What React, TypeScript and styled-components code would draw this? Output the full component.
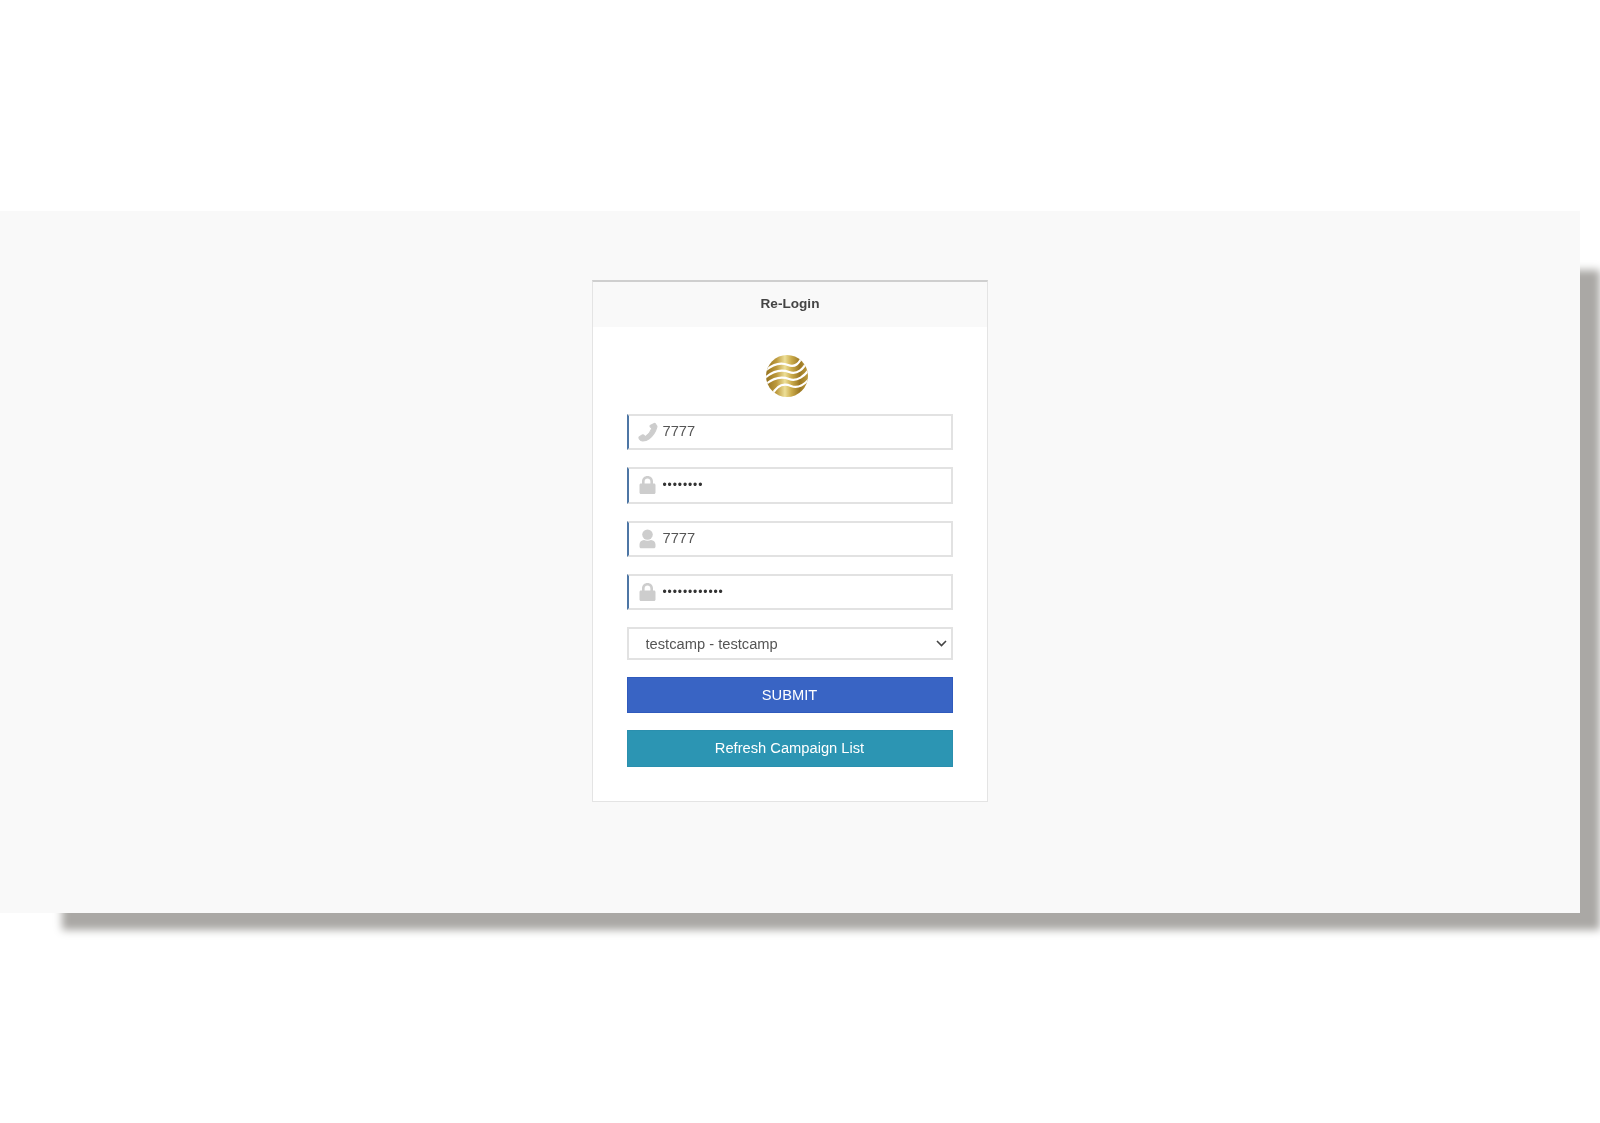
import React from "react";
import styled, { createGlobalStyle } from "styled-components";

const Global = createGlobalStyle`
  html, body { margin: 0; padding: 0; background: #fff; }
  body { font-family: "Liberation Sans", Arial, sans-serif; height: 1123px; overflow: hidden; }
`;

const Backdrop = styled.main`
  margin-top: 211px;
  width: 1580px;
  height: 702px;
  box-sizing: border-box;
  padding: 69px 0 0 592px;
  background: #f9f9f9;
  box-shadow: 41px 38px 8px -21px #aaa8a5;
`;

const Card = styled.section`
  width: 396px;
  box-sizing: border-box;
  background: #fff;
  border: 1px solid #e4e4e4;
  border-top: 2px solid #cfcfcf;
  filter: blur(0.35px);
`;

const CardHeader = styled.header`
  height: 45px;
  box-sizing: border-box;
  padding-bottom: 2px;
  display: flex;
  align-items: center;
  justify-content: center;
  background: #f9f9f9;
  color: #444;
  font-size: 13.6px;
  font-weight: 700;
`;

const CardBody = styled.form`
  display: flex;
  flex-direction: column;
  gap: 17px;
  padding: 28px 34.5px 34px 33.5px;
`;

const Logo = styled.svg`
  display: block;
  width: 42px;
  height: 42px;
  margin-left: 139.5px;
`;

const Field = styled.label`
  display: flex;
  align-items: center;
  height: 36.25px;
  box-sizing: border-box;
  background: #fff;
  border: 2px solid #e2e2e2;
  border-left: 2px solid #4d76a5;
`;

const FieldIcon = styled.svg`
  flex: none;
  width: 20px;
  height: 20px;
  margin-left: 9px;
  fill: #cdcdcd;
`;

const FieldInput = styled.input<{ type: string }>`
  flex: 1;
  min-width: 0;
  border: 0;
  outline: 0;
  padding: 0;
  margin: ${(p) => (p.type === "password" ? "0 0 0 5px" : "0 0 2px 5px")};
  background: transparent;
  color: ${(p) => (p.type === "password" ? "#333" : "#555")};
  font: ${(p) => (p.type === "password" ? "12px" : "14.7px")} "Liberation Sans", Arial, sans-serif;
  letter-spacing: ${(p) => (p.type === "password" ? "0.9px" : "0")};
`;

const SelectWrap = styled.div`
  position: relative;
  display: flex;
  height: 33px;
`;

const CampaignSelect = styled.select`
  flex: 1;
  appearance: none;
  box-sizing: border-box;
  padding: 0 0 0 17px;
  background-color: #fff;
  border: 2px solid #e2e2e2;
  border-radius: 0;
  outline: 0;
  color: #555;
  font: 14.7px "Liberation Sans", Arial, sans-serif;
`;

const SelectChevron = styled.svg`
  position: absolute;
  right: 6px;
  top: 13px;
  width: 11px;
  height: 7px;
  fill: none;
  stroke: #444;
  stroke-width: 1.6;
  pointer-events: none;
`;

const ActionButton = styled.button<{ $bg: string; $edge: string }>`
  height: 36.25px;
  box-sizing: border-box;
  padding: 0;
  border: 1px solid ${(p) => p.$edge};
  border-radius: 0;
  background: ${(p) => p.$bg};
  color: #fff;
  font: 14.7px "Liberation Sans", Arial, sans-serif;
`;

const PhoneIcon = () => (
  <FieldIcon viewBox="0 0 20 20">
    <path
      stroke="#cdcdcd"
      strokeWidth="1.1"
      strokeLinejoin="round"
      d="M15.700 1.700c.5-.5 1.100-.5 1.600 0l1.400 2c.3.5.3 1 .1 1.600C17.600 9.800 14.800 14 10.800 17c-1.800 1.400-4 2.100-6.300 2-1.200 0-2.300-.7-3-1.700l-.4-1c-.3-.6-.1-1.200.4-1.500l2.700-1.900c.6-.3 1.100-.3 1.600.2l1.200 1.200c.3.2.6.2.9 0 2.700-2.100 4.600-4.700 5.800-7.700.1-.3 0-.6-.3-.8l-1-.8c-.4-.4-.5-.9-.2-1.400z"
    />
  </FieldIcon>
);

const LockIcon = () => (
  <FieldIcon viewBox="0 0 20 20">
    <path
      fillRule="evenodd"
      d="M4 8.500V6.500C4 3.200 6.300 1 9.500 1s5.500 2.200 5.500 5.500v2h1c.9 0 1.500.6 1.500 1.500v7.500c0 .9-.6 1.500-1.500 1.500H3c-.9 0-1.500-.6-1.500-1.500V10c0-.9.6-1.500 1.500-1.500zm2.600 0h5.800v-2c0-1.800-1.200-3-2.900-3s-2.900 1.200-2.900 3z"
    />
  </FieldIcon>
);

const UserIcon = () => (
  <FieldIcon viewBox="0 0 20 20">
    <ellipse cx="9.500" cy="5.600" rx="5.300" ry="5.200" />
    <path d="M1.500 15.500c0-2.600 2-4.300 4.500-4.500 2 1 5 1 7 0 2.500.2 4.500 1.900 4.500 4.500v2c0 1-.7 1.800-1.700 1.800H3.200c-1 0-1.700-.8-1.700-1.800z" />
  </FieldIcon>
);

const LogoMark = () => (
  <Logo viewBox="0 0 42 42" role="img" aria-label="Logo">
    <defs>
      <linearGradient id="gold" x1="0" x2="1" y1="0" y2="0">
        <stop offset="0" stopColor="#96731f" />
        <stop offset="0.25" stopColor="#bd9a3e" />
        <stop offset="0.45" stopColor="#eddf97" />
        <stop offset="0.6" stopColor="#cdae4e" />
        <stop offset="0.8" stopColor="#9c7823" />
        <stop offset="1" stopColor="#bd9b3e" />
      </linearGradient>
      <clipPath id="globe">
        <circle cx="21" cy="21" r="21" />
      </clipPath>
    </defs>
    <g clipPath="url(#globe)">
      <rect width="42" height="42" fill="url(#gold)" />
      <g fill="none" stroke="#fff" strokeWidth="2.200">
        <path d="M-1 16C7 9 15 7 22 10 29 13 34 8 36 1" />
        <path d="M-1 23C7 16 15 14 23 17 31 20 38 14 41 6" />
        <path d="M-1 30C7 23 15 21 23 24 31 27 39 21 44 13" />
        <path d="M6 40C11 30 18 28 25 31 32 34 39 29 44 23" />
      </g>
    </g>
  </Logo>
);

export default function App() {
  return (
    <>
      <Global />
      <Backdrop>
        <Card>
          <CardHeader>Re-Login</CardHeader>
          <CardBody>
            <LogoMark />
            <Field>
              <PhoneIcon />
              <FieldInput type="text" defaultValue="7777" readOnly />
            </Field>
            <Field>
              <LockIcon />
              <FieldInput type="password" defaultValue="12345678" readOnly />
            </Field>
            <Field>
              <UserIcon />
              <FieldInput type="text" defaultValue="7777" readOnly />
            </Field>
            <Field>
              <LockIcon />
              <FieldInput type="password" defaultValue="123456789012" readOnly />
            </Field>
            <SelectWrap>
              <CampaignSelect defaultValue="testcamp">
                <option value="testcamp">testcamp - testcamp</option>
              </CampaignSelect>
              <SelectChevron viewBox="0 0 11 7">
                <path d="M1 1l4.500 4.500L10 1" />
              </SelectChevron>
            </SelectWrap>
            <ActionButton type="button" $bg="#3964c4" $edge="#2f5abd">SUBMIT</ActionButton>
            <ActionButton type="button" $bg="#2c95b3" $edge="#2a8fae">Refresh Campaign List</ActionButton>
          </CardBody>
        </Card>
      </Backdrop>
    </>
  );
}
